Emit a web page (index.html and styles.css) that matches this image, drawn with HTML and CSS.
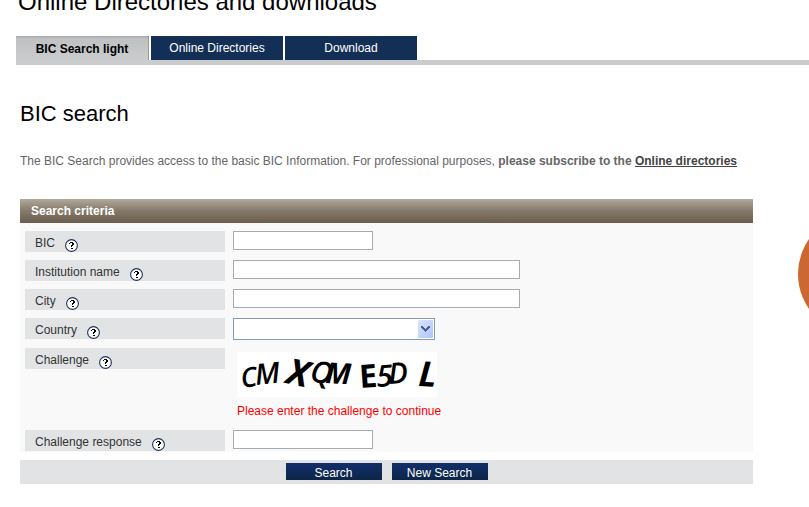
FILE: index.html
```html
<!DOCTYPE html>
<html lang="en">
<head>
    <meta charset="UTF-8">
    <meta name="viewport" content="width=device-width, initial-scale=1.0">
    <title>BIC Search</title>
    <link rel="stylesheet" href="styles.css">
</head>
<body>
    <svg class="sprite" aria-hidden="true">
        <symbol id="help" viewBox="0 0 13 13">
            <circle cx="6.5" cy="6.5" r="5.9" fill="#fff" stroke="#1d355c" stroke-width="1.1"/>
            <path d="M4 5V4h1V3h3v1h1v2H8v1H7v1H6V6h1V4H5v1zM6 9h2v1H6z" fill="#000"/>
        </symbol>
    </svg>
    <div class="page">
        <h1>Online Directories and downloads</h1>
        <nav class="tabs">
            <a class="tab active" href="#light">BIC Search light</a>
            <a class="tab" href="#directories">Online Directories</a>
            <a class="tab" href="#download">Download</a>
        </nav>
        <main class="content">
            <h2>BIC search</h2>
            <p class="intro">The BIC Search provides access to the basic BIC Information. For professional purposes, <b>please subscribe to the <a href="#directories">Online directories</a></b></p>
            <form class="search">
                <h3>Search criteria</h3>
                <div class="fields">
                    <div class="row">
                        <label for="bic">BIC <svg class="help"><use href="#help"/></svg></label>
                        <input class="short" type="text" id="bic">
                    </div>
                    <div class="row">
                        <label for="institution">Institution name <svg class="help"><use href="#help"/></svg></label>
                        <input type="text" id="institution">
                    </div>
                    <div class="row">
                        <label for="city">City <svg class="help"><use href="#help"/></svg></label>
                        <input type="text" id="city">
                    </div>
                    <div class="row">
                        <label for="country">Country <svg class="help"><use href="#help"/></svg></label>
                        <div class="select">
                            <select id="country"><option></option></select>
                            <svg class="arrow" viewBox="0 0 15 18">
                                <defs>
                                    <linearGradient id="blue" x1="0" y1="0" x2="1" y2="1">
                                        <stop offset="0" stop-color="#dbe5fd"/>
                                        <stop offset="1" stop-color="#acc4fb"/>
                                    </linearGradient>
                                </defs>
                                <rect width="15" height="18" rx="1" fill="url(#blue)"/>
                                <path d="M3 6h2v1h1v1h1v1h1V8h1V7h1V6h2v2h-1v1h-1v1H9v1H8v1H7v-1H6v-1H5V9H4V8H3z" fill="#4d6185"/>
                            </svg>
                        </div>
                    </div>
                    <div class="row">
                        <label for="response">Challenge <svg class="help"><use href="#help"/></svg></label>
                        <div class="challenge">
                            <svg class="captcha" viewBox="0 0 200 45">
                                <g font-family="'Open Sans', sans-serif" font-weight="700">
                                    <text transform="translate(5 36) rotate(-8)" font-size="27" font-weight="600" font-style="italic">C</text>
                                    <text transform="translate(19 33) rotate(-6)" font-size="29" font-weight="600" font-style="italic">M</text>
                                    <text transform="translate(48 31) rotate(12)" font-size="36" font-style="italic">X</text>
                                    <text transform="translate(72 29) rotate(10)" font-size="30" font-weight="600" font-style="italic">Q</text>
                                    <text transform="translate(88 31) rotate(3)" font-size="29" font-style="italic">M</text>
                                    <text transform="translate(123 36) rotate(-4)" font-size="32">E</text>
                                    <text transform="translate(140 35) rotate(-4)" font-size="30" font-weight="600" font-style="italic">5</text>
                                    <text transform="translate(152 32) rotate(-4)" font-size="29" font-weight="600" font-style="italic">D</text>
                                    <text transform="translate(181 34) rotate(3)" font-size="35" font-style="italic">L</text>
                                </g>
                            </svg>
                            <p class="error">Please enter the challenge to continue</p>
                        </div>
                    </div>
                    <div class="row">
                        <label for="response">Challenge response <svg class="help"><use href="#help"/></svg></label>
                        <input class="short" type="text" id="response">
                    </div>
                </div>
                <div class="buttons">
                    <button type="submit">Search</button>
                    <button type="reset">New Search</button>
                </div>
            </form>
        </main>
        <div class="circle"></div>
    </div>
</body>
</html>
```

FILE: styles.css
```css
body {
    margin: 0;
    font-family: Arial, "Liberation Sans", sans-serif;
    font-size: 12px;
    line-height: 16px;
    color: #333;
    background-color: #fff;
}
.sprite {
    display: none;
}
.page {
    position: relative;
    overflow: hidden;
    min-height: 100vh;
}
h1, h2, h3, p {
    margin: 0;
}
h1 {
    margin: -12px 0 20px 18px;
    font-size: 24px;
    line-height: 28px;
    font-weight: normal;
    color: #000;
}
.tabs {
    display: flex;
    gap: 2px;
    margin-left: 16px;
    border-bottom: 5px solid #cacccd;
}
.tab {
    width: 132px;
    line-height: 24px;
    text-align: center;
    text-decoration: none;
    color: #fff;
    background-color: #132f55;
}
.tab.active {
    border-right: 1px solid #999;
    font-weight: bold;
    line-height: 26px;
    height: 24px;
    color: #000;
    background: linear-gradient(#a8a9aa, #bfc1c2 3px, #cacccd);
}
.content {
    max-width: 733px;
    padding: 35px 20px 20px;
}
h2 {
    margin-bottom: 25px;
    font-size: 22px;
    line-height: 28px;
    font-weight: normal;
    color: #000;
}
.intro {
    margin-bottom: 30px;
    color: #666;
}
.intro a {
    color: #444;
}
h3 {
    padding-left: 11px;
    font-size: 12px;
    line-height: 24px;
    color: #fff;
    background: linear-gradient(#b3ada0, #a49c8d 3px, #84796a 12px, #6b5d4c);
}
.fields {
    display: flex;
    flex-direction: column;
    gap: 8px;
    padding: 8px 5px 1px;
    background-color: #f9f9f9;
}
.row {
    display: flex;
    align-items: flex-start;
    gap: 8px;
}
label {
    display: flex;
    gap: 10px;
    box-sizing: border-box;
    width: 200px;
    height: 21px;
    padding: 4px 0 0 10px;
    background-color: #e1e3e5;
}
.help {
    width: 13px;
    height: 13px;
    margin-top: 4px;
}
input {
    box-sizing: border-box;
    width: 287px;
    height: 19px;
    padding: 0 3px;
    border: 1px solid #a5acb2;
    background-color: #fff;
    font: inherit;
}
input.short {
    width: 140px;
}
.select {
    position: relative;
    width: 202px;
    height: 22px;
}
select {
    display: block;
    width: 100%;
    height: 22px;
    border: 1px solid #7f9db9;
    border-radius: 0;
    background-color: #fff;
    font: inherit;
    appearance: none;
}
.arrow {
    position: absolute;
    top: 2px;
    right: 2px;
    width: 15px;
    height: 18px;
    pointer-events: none;
}
.challenge {
    padding: 4px 0 3px 4px;
}
.captcha {
    display: block;
    overflow: visible;
    width: 200px;
    height: 45px;
    margin-bottom: 6px;
    background-color: #fff;
}
.error {
    color: #f00;
}
.buttons {
    display: flex;
    justify-content: center;
    gap: 10px;
    margin-top: 8px;
    padding: 3px 0 4px;
    background-color: #e1e3e5;
}
button {
    width: 96px;
    height: 17px;
    padding: 3px 0 0;
    border: none;
    color: #fff;
    background: linear-gradient(#122f6c, #0d2547);
    font: inherit;
    line-height: 14px;
    cursor: pointer;
}
/* runs off the right side of the page */
.circle {
    position: absolute;
    top: 213px;
    right: -111px;
    width: 122px;
    height: 122px;
    border-radius: 50%;
    background-color: #cc6633;
}
```
